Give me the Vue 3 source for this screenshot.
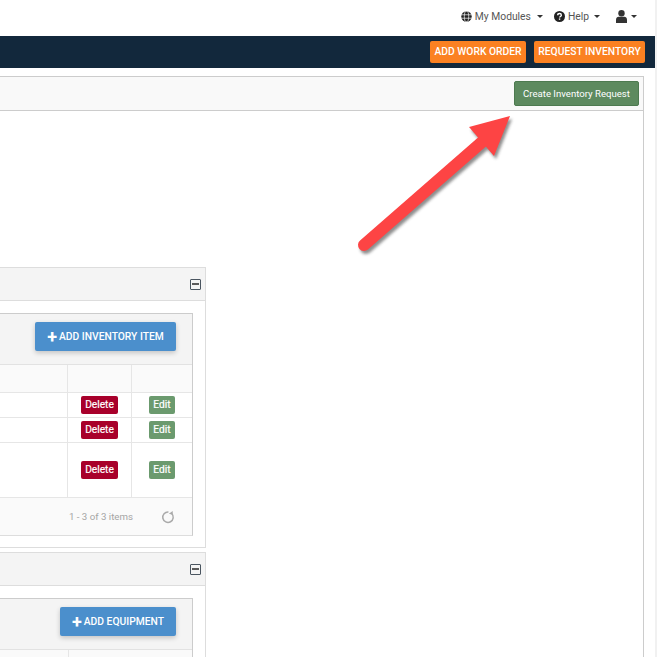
<script setup>
const rows = [
  { id: 1, height: 25 },
  { id: 2, height: 25 },
  { id: 3, height: 55 }
]
</script>

<template>
  <div class="page">
    <header class="topbar">
      <span class="toplink">
        <svg class="ico" viewBox="0 0 16 16" width="11" height="11"><circle cx="8" cy="8" r="7.6" fill="#222"/><g fill="none" stroke="#fff" stroke-width="1"><ellipse cx="8" cy="8" rx="3.2" ry="7.6"/><path d="M0.4 5.5h15.2M0.4 10.5h15.2"/></g></svg>
        My Modules <i class="caret"></i>
      </span>
      <span class="toplink help">
        <svg class="ico" viewBox="0 0 16 16" width="11" height="11"><circle cx="8" cy="8" r="8" fill="#222"/><path d="M5.4 6.2c0-1.6 1.2-2.5 2.7-2.5s2.6.9 2.6 2.3c0 2-2.5 1.9-2.5 3.6" fill="none" stroke="#fff" stroke-width="2"/><rect x="7.1" y="10.8" width="2" height="2" fill="#fff"/></svg>
        Help <i class="caret tight"></i>
      </span>
      <span class="toplink user">
        <svg class="ico" viewBox="0 0 13 13" width="13" height="13"><circle cx="6.5" cy="3.2" r="3.2" fill="#333"/><path d="M1 13v-3c0-2.2 1.3-3.2 2.6-3.2h5.8c1.3 0 2.6 1 2.6 3.2v3z" fill="#333"/></svg>
        <i class="caret"></i>
      </span>
    </header>

    <nav class="navband">
      <button class="orange wo">ADD WORK ORDER</button>
      <button class="orange ri">REQUEST INVENTORY</button>
    </nav>

    <main class="panel">
      <div class="panel-head">
        <button class="create">Create Inventory Request</button>
      </div>
      <div class="panel-body">
        <section class="card">
          <div class="card-head"><span class="minus"></span></div>
          <div class="card-body">
            <div class="grid">
              <div class="toolbar">
                <button class="blue inv"><span class="plus">+</span>ADD INVENTORY ITEM</button>
              </div>
              <div class="row head-row"><div class="c0"></div><div class="c1"></div><div class="c2"></div></div>
              <div v-for="r in rows" :key="r.id" class="row" :style="{ height: r.height + 'px' }">
                <div class="c0"></div>
                <div class="c1"><span class="del">Delete</span></div>
                <div class="c2"><span class="edit">Edit</span></div>
              </div>
              <div class="pager">
                <span class="count">1 - 3 of 3 items</span>
                <svg class="reload" viewBox="0 0 16 16" width="14" height="14"><path d="M12.2 3.9A6 6 0 1 1 8.5 2.2" fill="none" stroke="#aaa" stroke-width="1.7"/><path d="M13.4 1.2v4.2l-4.4-1z" fill="#aaa"/></svg>
              </div>
            </div>
          </div>
        </section>

        <section class="card second">
          <div class="card-head"><span class="minus"></span></div>
          <div class="card-body">
            <div class="grid">
              <div class="toolbar">
                <button class="blue eq"><span class="plus">+</span>ADD EQUIPMENT</button>
              </div>
              <div class="row head-row eqrow"><div class="c0"></div><div class="c1"></div></div>
            </div>
          </div>
        </section>

        <svg class="arrow" width="180" height="160" viewBox="350 105 180 160">
          <defs>
            <filter id="sh" x="-20%" y="-20%" width="140%" height="140%">
              <feGaussianBlur stdDeviation="1.6"/>
            </filter>
          </defs>
          <g transform="translate(2 3)" opacity=".55" filter="url(#sh)">
            <path d="M364 245L482 142" stroke="#333" stroke-width="12" stroke-linecap="round" fill="none"/>
            <path d="M510 116L469 127L494 156Z" fill="#333"/>
          </g>
          <path d="M364 245L482 142" stroke="#fd4444" stroke-width="12" stroke-linecap="round" fill="none"/>
          <path d="M510 116L469 127L494 156Z" fill="#fd4444"/>
        </svg>
      </div>
    </main>
  </div>
</template>

<style scoped>
.page {
  width: 657px;
  height: 657px;
  overflow: hidden;
  background: #fff;
  border-right: 2px solid #f1f1f1;
  box-sizing: border-box;
  font-family: Roboto, "Liberation Sans", sans-serif;
  position: relative;
}
.topbar {
  height: 36px;
  display: flex;
  justify-content: flex-end;
  align-items: center;
  padding-right: 18px;
  padding-bottom: 3px;
  box-sizing: border-box;
  color: #555;
  font-size: 10.3px;
}
.toplink {
  display: inline-flex;
  align-items: center;
  gap: 3px;
}
.help { margin-left: 11px; }
.user { margin-left: 15px; gap: 0; }
.ico { flex: none; }
.caret {
  display: inline-block;
  width: 0;
  height: 0;
  margin-left: 3px;
  border-left: 3px solid transparent;
  border-right: 3px solid transparent;
  border-top: 3px solid #333;
}
.caret.tight { margin-left: 2px; }
.navband {
  height: 32px;
  background: #12283c;
  display: flex;
  justify-content: flex-end;
  align-items: center;
  gap: 8px;
  padding-right: 10px;
  padding-bottom: 1px;
  box-sizing: border-box;
}
button {
  font-family: inherit;
  cursor: pointer;
  border: 0;
  padding: 0;
  white-space: nowrap;
}
.orange {
  height: 22px;
  background: #fb8122;
  color: #fff;
  font-weight: 500;
  font-size: 10.3px;
  border-radius: 2px;
}
.wo { width: 96px; }
.ri { width: 111px; }
.panel {
  margin-top: 8px;
  width: 644px;
  height: 600px;
  box-sizing: border-box;
  border: 1px solid #ccc;
  border-left: 0;
  border-bottom: 0;
}
.panel-head {
  height: 34px;
  background: #f9f9f9;
  border-bottom: 1px solid #ccc;
  display: flex;
  justify-content: flex-end;
  align-items: flex-start;
  padding: 4px 4px 0 0;
  box-sizing: border-box;
}
.create {
  width: 125px;
  height: 25px;
  background: #5d8a5f;
  border: 1px solid #4d7a50;
  color: #fff;
  font-size: 9.6px;
  border-radius: 2px;
}
.panel-body {
  position: relative;
  padding-top: 156px;
}
.arrow {
  position: absolute;
  left: 350px;
  top: -6px;
}
.card {
  width: 206px;
  box-sizing: border-box;
  border: 1px solid #ddd;
  border-left: 0;
  height: 281px;
}
.card.second { margin-top: 4px; height: 120px; }
.card-head {
  height: 33px;
  background: #f4f4f4;
  border-bottom: 1px solid #ddd;
  display: flex;
  justify-content: flex-end;
  align-items: center;
  padding-right: 4px;
  box-sizing: border-box;
}
.minus {
  width: 9px;
  height: 9px;
  border: 1px solid #4a5560;
  border-radius: 1px;
  position: relative;
  background: #f4f4f4;
}
.minus::after {
  content: "";
  position: absolute;
  left: 1px;
  right: 1px;
  top: 3px;
  height: 2px;
  background: #5a5a5a;
}
.card-body {
  padding: 12px 12px 0 0;
}
.grid {
  border: 1px solid #ccc;
  border-left: 0;
  border-bottom-color: #ddd;
  background: #fff;
}
.toolbar {
  height: 51px;
  background: #f4f4f4;
  display: flex;
  justify-content: flex-end;
  align-items: flex-start;
  padding: 8px 16px 0 0;
  box-sizing: border-box;
  border-bottom: 1px solid #e2e2e2;
}
.blue {
  height: 29px;
  background: #4b8fcc;
  color: #fff;
  font-size: 10.3px;
  font-weight: 500;
  border-radius: 2px;
  box-shadow: 0 2px 5px rgba(0, 0, 0, .2);
  display: flex;
  align-items: center;
  justify-content: center;
}
.blue.inv { width: 141px; }
.blue.eq { width: 116px; }
.plus {
  font-size: 18px;
  font-weight: 700;
  line-height: 1;
  margin-right: 2px;
}
.row {
  display: flex;
  border-bottom: 1px solid #e6e6e6;
  box-sizing: border-box;
}
.head-row {
  height: 28px;
  background: #fafafa;
}
.c0 { width: 67px; flex: none; }
.c1, .c2 {
  border-left: 1px solid #e6e6e6;
  display: flex;
  align-items: center;
  justify-content: center;
  box-sizing: border-box;
}
.c1 { width: 64px; flex: none; }
.c2 { width: 61px; flex: none; }
.eqrow .c0 { width: 68px; }
.eqrow .c1 { flex: 1; }
.del, .edit {
  height: 18px;
  line-height: 18px;
  color: #fff;
  font-size: 10.2px;
  -webkit-text-stroke: .2px #fff;
  text-align: center;
  border-radius: 2px;
}
.del {
  width: 37px;
  background: #a8002b;
}
.edit {
  width: 26px;
  background: #6b9a6e;
}
.pager {
  height: 37px;
  background: #fafafa;
  display: flex;
  justify-content: flex-end;
  align-items: center;
  padding-right: 17px;
  box-sizing: border-box;
}
.count {
  color: #a5a5a5;
  font-size: 9.7px;
  margin-right: 28px;
}
.reload { flex: none; }
</style>
